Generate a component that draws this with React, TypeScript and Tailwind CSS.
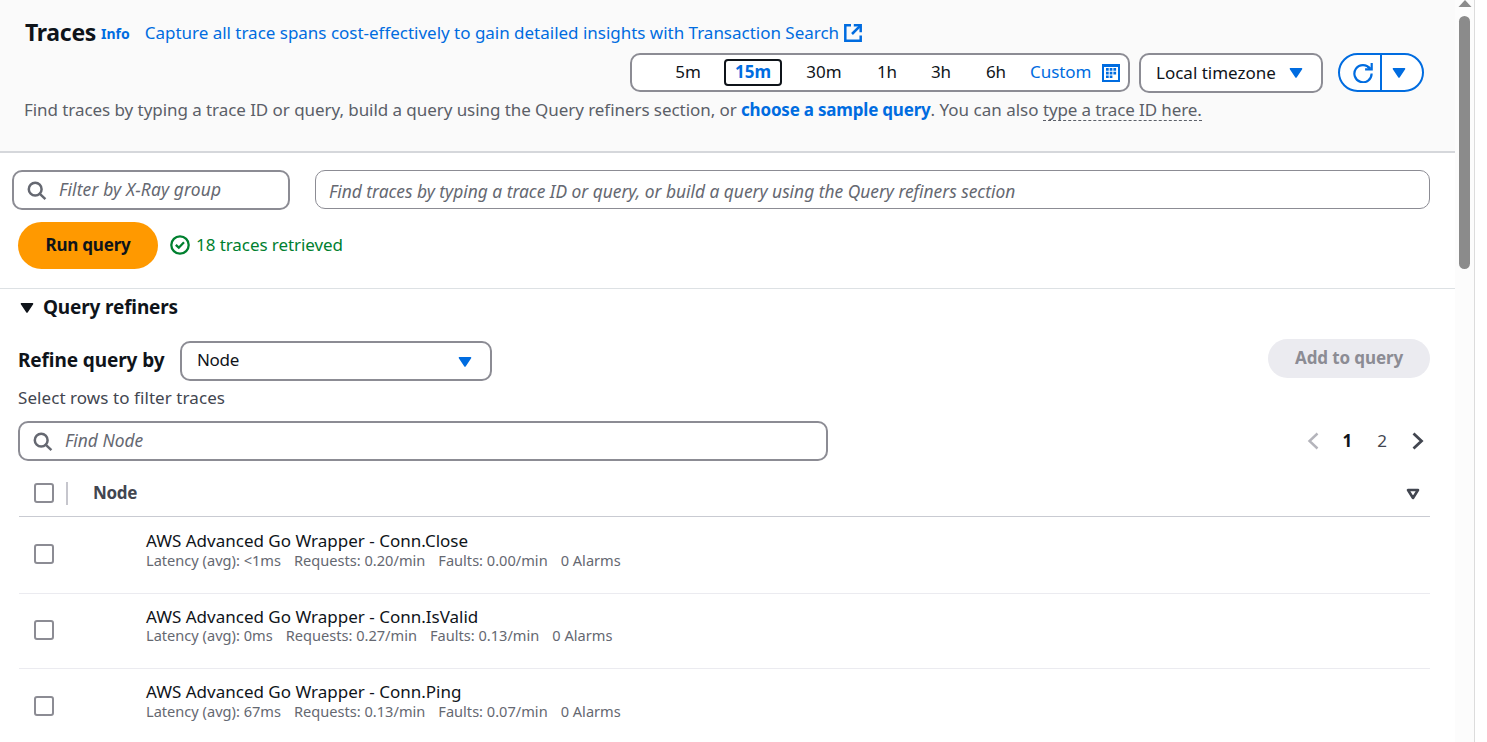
import type { ReactNode } from "react";

const ranges = [
  { label: "5m", box: "w-[58px]" },
  { label: "15m", box: "w-[58px]", active: true },
  { label: "30m", box: "ml-[13px] w-[58px]" },
  { label: "1h", box: "ml-[13px] w-[42px]" },
  { label: "3h", box: "ml-[12px] w-[42px]" },
  { label: "6h", box: "ml-[13px] w-[42px]" },
];

const rows = [
  { name: "Conn.Close", latency: "<1ms", requests: "0.20", faults: "0.00", height: "h-[77px] pt-[13px]", check: "mt-[14px]", meta: "-mt-px" },
  { name: "Conn.IsValid", latency: "0ms", requests: "0.27", faults: "0.13", height: "h-[75px] pt-[12px]", check: "mt-[14px]", meta: "-mt-[2px]" },
  { name: "Conn.Ping", latency: "67ms", requests: "0.13", faults: "0.07", height: "h-[74px] pt-[12px]", check: "mt-[15px]", meta: "-mt-px" },
];

function CaretDown({ className = "" }: { className?: string }) {
  return (
    <svg viewBox="0 0 14 12" className={"h-[12px] w-[14px] shrink-0 " + className} fill="currentColor">
      <path d="M1.5 1.7h11L7 10z" stroke="currentColor" strokeWidth="1.6" strokeLinejoin="round" />
    </svg>
  );
}

function SearchIcon() {
  return (
    <svg viewBox="0 0 20 20" className="-ml-px mt-[2px] h-[20px] w-[20px] shrink-0" fill="none" stroke="#656871" strokeWidth="2.5">
      <circle cx="8.2" cy="8.2" r="6.4" />
      <path d="M12.6 12.6l5.8 5.6" />
    </svg>
  );
}

function ExternalIcon() {
  return (
    <svg viewBox="0 0 18 18" className="h-[18px] w-[18px] shrink-0" fill="none" stroke="#006ce0" strokeWidth="2.5">
      <path d="M7 1.3H1.3v15.4h15.4V11.5" />
      <path d="M9.8 1.3h6.9v7" />
      <path d="M16.4 1.6L8 10" />
    </svg>
  );
}

function CalendarIcon() {
  return (
    <svg viewBox="0 0 18 18" className="h-[18px] w-[18px] shrink-0" fill="#006ce0">
      <path fillRule="evenodd" d="M0 0h18v18H0zM2 3v13h14V3z" />
      <path d="M4 4h2.7v2.7H4zM7.7 4h2.7v2.7H7.7zM11.4 4h2.7v2.7h-2.7zM4 7.7h2.7v2.7H4zM7.7 7.7h2.7v2.7H7.7zM11.4 7.7h2.7v2.7h-2.7zM4 11.4h2.7v2.7H4zM7.7 11.4h2.7v2.7H7.7z" />
    </svg>
  );
}

function RefreshIcon() {
  return (
    <svg viewBox="0 0 20 20" className="h-[20px] w-[20px] shrink-0" fill="none" stroke="#006ce0" strokeWidth="2.2">
      <path d="M18.6 10.5a8.6 8.6 0 1 1-1.7-5" />
      <path d="M18.7 0v6.3h-6.6" />
      <path d="M14.6 3.6l2.8 2" />
    </svg>
  );
}

function CheckCircle() {
  return (
    <svg viewBox="0 0 20 20" className="h-[20px] w-[20px] shrink-0" fill="none" stroke="#00802f" strokeWidth="2.3">
      <circle cx="10" cy="10" r="8.7" />
      <path d="M5.8 9.8l3 2.9 5.2-5.4" />
    </svg>
  );
}

function Checkbox({ className = "" }: { className?: string }) {
  return <div className={"h-[20px] w-[20px] shrink-0 rounded-[3px] border-2 border-[#8c8c94] bg-white " + className} />;
}

function Outlined({ className = "", children }: { className?: string; children: ReactNode }) {
  return (
    <div className={"flex shrink-0 items-center rounded-[10px] border-2 border-[#8c8c94] bg-white " + className}>
      {children}
    </div>
  );
}

function Header() {
  return (
    <header className="h-[153px] border-b-2 border-[#d5d7db] bg-[#fafafa] pt-[20px] pl-[25px]">
      <div className="flex h-[26px] items-center leading-[26px]">
        <h1 className="w-[71px] pb-[3px] text-[23px] font-bold tracking-[-0.3px]">Traces</h1>
        <a className="ml-[5px] pt-px text-[14px] font-bold text-[#006ce0]">Info</a>
        <a className="ml-[15px] text-[#006ce0] tracking-[-0.015px]">
          Capture all trace spans cost-effectively to gain detailed insights with Transaction Search
        </a>
        <div className="ml-[5px]">
          <ExternalIcon />
        </div>
      </div>
      <div className="mt-[7px] flex h-[40px] items-start pl-[605px]">
        <Outlined className="h-[39px] w-[500px] pl-[27px]">
          {ranges.map((r) => (
            <div
              key={r.label}
              className={
                "flex h-[27px] items-center justify-center pb-px " +
                r.box +
                (r.active ? " ml-[7px] rounded-[4px] border-2 border-[#0f141a] font-bold text-[#006ce0]" : "")
              }
            >
              {r.label}
            </div>
          ))}
          <a className="ml-[13px] pb-px text-[#006ce0] tracking-[-0.05px]">Custom</a>
          <div className="ml-[11px] pt-px">
            <CalendarIcon />
          </div>
        </Outlined>
        <Outlined className="ml-[9px] h-[40px] w-[184px] pl-[15px]">
          Local timezone
          <CaretDown className="ml-[13px] text-[#006ce0]" />
        </Outlined>
        <div className="ml-[15px] flex h-[39px] w-[86px] overflow-hidden rounded-full border-2 border-[#006ce0] bg-white">
          <div className="flex w-[42px] items-center justify-center border-r-2 border-[#006ce0] pl-[6px]">
            <RefreshIcon />
          </div>
          <div className="flex flex-1 items-center pl-[10px] pt-px">
            <CaretDown className="text-[#006ce0]" />
          </div>
        </div>
      </div>
      <p className="mt-[5px] -ml-px whitespace-pre leading-[24px] text-[#5b5f68]">
        <span className="tracking-[-0.06px]">
          {"Find traces by typing a trace ID or query, build a query using the Query refiners section, or "}
        </span>
        <a className="font-bold tracking-[-0.2px] text-[#006ce0]">choose a sample query</a>
        {". You can also "}
        <span className="inline-block h-[23px] border-b border-dashed border-[#5b5f68] tracking-[-0.12px]">type a trace ID here.</span>
      </p>
    </header>
  );
}

function QueryBar() {
  return (
    <section className="h-[136px] border-b border-[#dde1e4] pt-[17px] pl-[12px]">
      <div className="flex h-[40px] items-start text-[17.4px] italic text-[#656871]">
        <Outlined className="h-[40px] w-[278px] pl-[14px]">
          <SearchIcon />
          <span className="ml-[12px] pb-px tracking-[0.14px]">Filter by X-Ray group</span>
        </Outlined>
        <div className="ml-[25px] flex h-[39px] w-[1115px] items-center rounded-[10px] border border-[#8c8c94] bg-white pl-[13px] pt-[3px] tracking-[-0.02px]">
          Find traces by typing a trace ID or query, or build a query using the Query refiners section
        </div>
      </div>
      <div className="mt-[12px] flex h-[47px] items-center pl-[6px]">
        <button className="h-[47px] w-[140px] rounded-full bg-[#ff9900] pb-px font-bold tracking-[-0.2px]">Run query</button>
        <div className="ml-[12px] flex items-center text-[#00802f]">
          <div className="pb-[2px]">
            <CheckCircle />
          </div>
          <span className="ml-[6px] pb-[2px] tracking-[-0.07px]">18 traces retrieved</span>
        </div>
      </div>
    </section>
  );
}

function Refiners() {
  return (
    <section className="pl-[18px]">
      <div className="flex h-[36px] items-center pl-[2px]">
        <CaretDown className="mt-px" />
        <h2 className="ml-[9px] text-[19px] font-bold tracking-[-0.16px]">Query refiners</h2>
      </div>
      <div className="mt-[14px] flex h-[44px] w-[1412px] items-start">
        <h3 className="w-[162px] pt-[9px] text-[19px] leading-[24px] font-bold tracking-[-0.1px]">Refine query by</h3>
        <Outlined className="mt-[2px] h-[40px] w-[312px] justify-between pr-[18px] pb-[2px] pl-[15px]">
          <span className="tracking-[-0.3px]">Node</span>
          <CaretDown className="mt-[3px] text-[#006ce0]" />
        </Outlined>
        <button className="ml-auto h-[39px] w-[162px] rounded-full bg-[#ebebf0] pb-px font-bold tracking-[-0.11px] text-[#8c8c94]">
          Add to query
        </button>
      </div>
      <p className="mt-[3px] leading-[24px] tracking-[0.07px] text-[#424650]">Select rows to filter traces</p>
      <div className="mt-[11px] flex h-[40px] w-[1412px] items-center">
        <Outlined className="h-[40px] w-[810px] pl-[14px] text-[17.4px] text-[#656871] italic">
          <SearchIcon />
          <span className="ml-[12px] pb-px">Find Node</span>
        </Outlined>
        <div className="ml-auto flex items-center pr-[6px]">
          <svg viewBox="0 0 12 18" className="h-[18px] w-[12px]" fill="none" stroke="#b4b4bb" strokeWidth="2.4">
            <path d="M10.5 1.5L2.5 9l8 7.5" />
          </svg>
          <span className="ml-[24px] font-bold">1</span>
          <span className="ml-[25px] text-[#424650]">2</span>
          <svg viewBox="0 0 12 18" className="ml-[25px] h-[18px] w-[12px]" fill="none" stroke="#424650" strokeWidth="2.8">
            <path d="M1.5 1.5L9.5 9l-8 7.5" />
          </svg>
        </div>
      </div>
      <div className="w-[1412px] pl-px">
        <div className="flex h-[56px] items-center border-b border-[#c9cbd2] pb-[7px] pl-[15px] pt-[16px]">
          <Checkbox className="mb-px" />
          <div className="ml-[12px] mt-px h-[23px] w-[2px] bg-[#c6c6cd]" />
          <span className="ml-[25px] font-bold tracking-[-0.3px] text-[#424650]">Node</span>
          <svg viewBox="0 0 14 12" className="mt-px mr-[10px] ml-auto h-[12px] w-[14px]" fill="none" stroke="#424650" strokeWidth="2.6" strokeLinejoin="round">
            <path d="M2 2h10l-5 8z" />
          </svg>
        </div>
        {rows.map((r) => (
          <div key={r.name} className={"flex items-start overflow-hidden border-b border-[#ebebf0] pl-[15px] " + r.height}>
            <Checkbox className={r.check} />
            <div className="ml-[92px]">
              <div className="leading-[22px]">AWS Advanced Go Wrapper - {r.name}</div>
              <div className={"flex gap-[13px] text-[14.6px] leading-[18px] text-[#656871] " + r.meta}>
                <span>Latency (avg): {r.latency}</span>
                <span>Requests: {r.requests}/min</span>
                <span>Faults: {r.faults}/min</span>
                <span>0 Alarms</span>
              </div>
            </div>
          </div>
        ))}
      </div>
    </section>
  );
}

export default function App() {
  return (
    <div className="flex h-[742px] w-[1487px] overflow-hidden bg-white font-['Noto_Sans',sans-serif] text-[17px] text-[#0f141a]">
      <main className="w-[1455px] shrink-0">
        <Header />
        <QueryBar />
        <Refiners />
      </main>
      <div className="flex w-[20px] shrink-0 flex-col items-center border-r border-[#dcdcdc] bg-[#fcfcfc]">
        <svg viewBox="0 0 14 8" className="h-[8px] w-[14px]" fill="#8b8b8b">
          <path d="M7 0l6.5 7H.5z" />
        </svg>
        <div className="mt-[8px] h-[253px] w-[11px] rounded-full bg-[#8b8b8b]" />
      </div>
    </div>
  );
}
